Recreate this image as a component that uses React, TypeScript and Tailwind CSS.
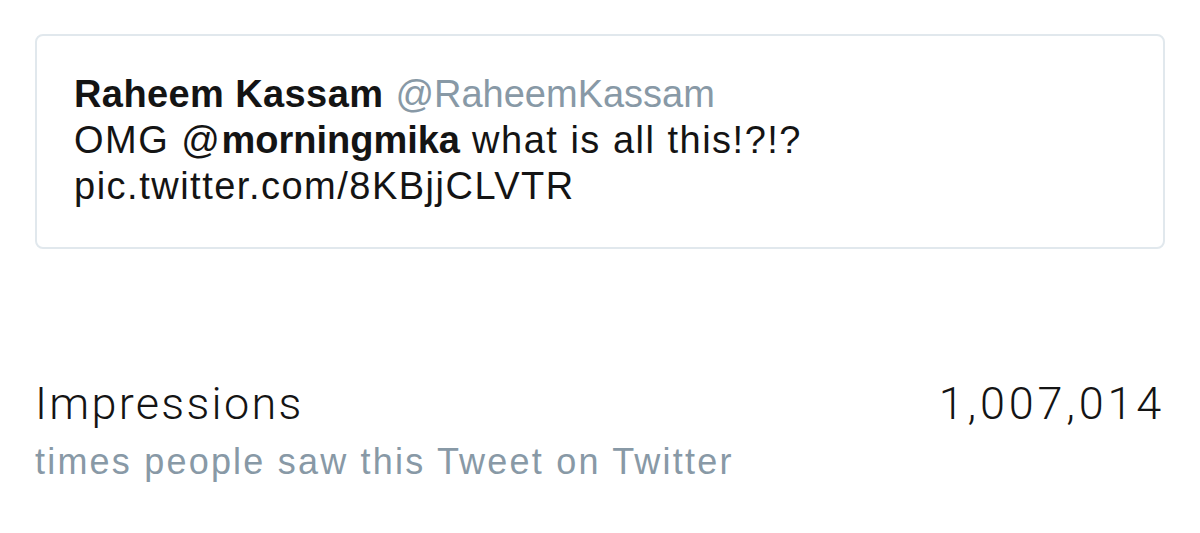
export default function App() {
  return (
    <div className="w-[1200px] h-[533px] bg-white overflow-hidden font-['Liberation_Sans',Arial,sans-serif]">
      <div className="pt-[34px] px-[35px]">
        {/* quoted tweet card */}
        <div className="h-[215px] rounded-[8px] border-2 border-[#e1e8ed] pl-[37px] pt-[35px] text-[38px] leading-[46px] text-[#141414] tracking-[1.5px]">
          <div>
            <span className="font-bold tracking-[0.4px]">Raheem Kassam</span>{" "}
            <span className="text-[#8899a6] tracking-normal">@RaheemKassam</span>
          </div>
          <div>
            OMG @<span className="font-bold tracking-normal">morningmika</span> what is all this!?!?
          </div>
          <div>pic.twitter.com/8KBjjCLVTR</div>
        </div>

        {/* impressions row */}
        <div className="mt-[129px] flex justify-between">
          <div>
            <div className="font-['Roboto',sans-serif] text-[45px] leading-[52px] font-light tracking-[2.3px] text-[#141414]">
              Impressions
            </div>
            <div className="mt-[10px] text-[36px] leading-[44px] tracking-[2.2px] text-[#8899a6]">
              times people saw this Tweet on Twitter
            </div>
          </div>
          <div className="font-['Roboto',sans-serif] text-[45px] leading-[52px] font-light tracking-[3.8px] text-[#141414]">
            1,007,014
          </div>
        </div>
      </div>
    </div>
  );
}
